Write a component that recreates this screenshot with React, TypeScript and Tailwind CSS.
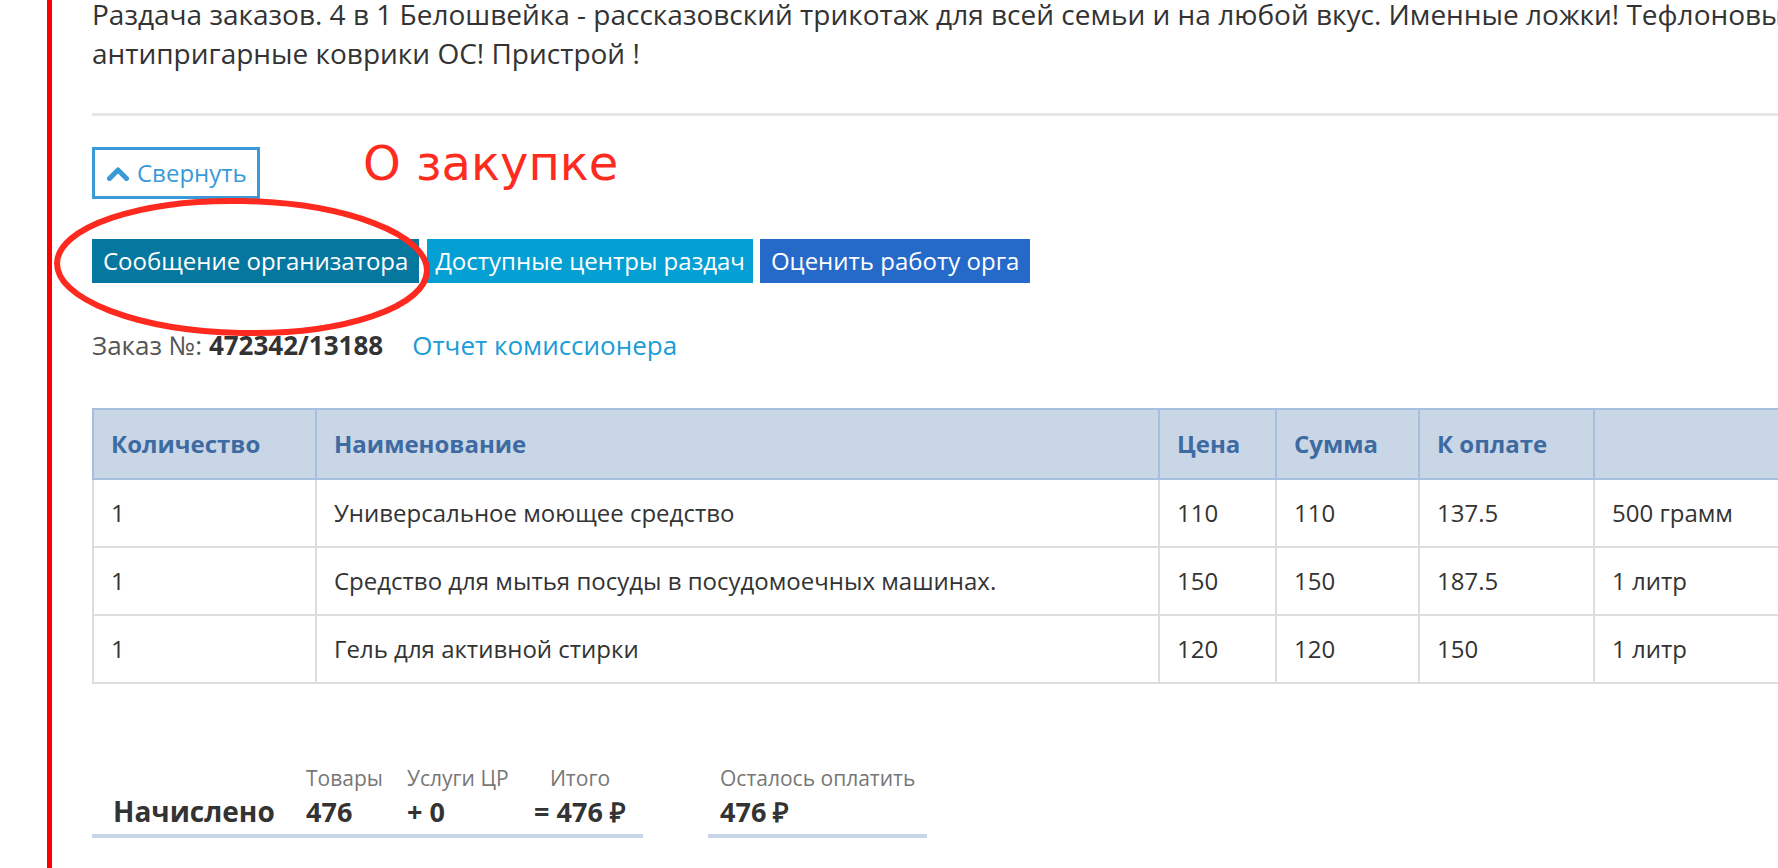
import React from "react";

type Row = {
  qty: string;
  name: string;
  price: string;
  sum: string;
  toPay: string;
  note: string;
};

const rows: Row[] = [
  { qty: "1", name: "Универсальное моющее средство", price: "110", sum: "110", toPay: "137.5", note: "500 грамм" },
  { qty: "1", name: "Средство для мытья посуды в посудомоечных машинах.", price: "150", sum: "150", toPay: "187.5", note: "1 литр" },
  { qty: "1", name: "Гель для активной стирки", price: "120", sum: "120", toPay: "150", note: "1 литр" },
];

const ChevronUp = () => (
  <svg width="22" height="15" viewBox="0 0 22 15" className="shrink-0">
    <path d="M2.5 12.5 L11 4 L19.5 12.5" fill="none" stroke="#3a9ad8" strokeWidth="5" strokeLinejoin="round" strokeLinecap="round" />
  </svg>
);

type SumColProps = {
  label: string;
  value: string;
  width: string;
  center?: boolean;
};

const SumCol = ({ label, value, width, center }: SumColProps) => (
  <div className={`${width} ${center ? "text-center" : ""}`}>
    <div className="text-[21px] leading-[28px] text-[#777]">{label}</div>
    <div className="mt-[3px] text-[27px] leading-[33px] font-bold text-[#333]">{value}</div>
  </div>
);

export default function App() {
  return (
    <div className="relative h-[868px] w-full overflow-hidden bg-white font-['Open_Sans',sans-serif] text-[#333]">
      <div className="w-[1932px] pl-[92px]">
        <p className="mt-[-5px] w-[1770px] text-[28px] leading-[39px] text-[#333]">
          Раздача заказов. 4 в 1 Белошвейка - рассказовский трикотаж для всей семьи и на любой вкус. Именные ложки! Тефлоновые
          антипригарные коврики ОС! Пристрой !
        </p>

        <div className="mt-[40px] h-[3px] bg-[#e6e6e6]" />

        <div className="mt-[31px] flex items-start">
          <button className="flex h-[52px] w-[168px] items-center gap-[8px] border-[3px] border-[#3a9ad8] pl-[12px] text-[24px] text-[#3a9ad8]">
            <ChevronUp />
            <span>Свернуть</span>
          </button>
          <div className="ml-[103px] mt-[-14px] font-['DejaVu_Sans',sans-serif] text-[48px] leading-[60px] text-[#fe2c1f]">
            О закупке
          </div>
        </div>

        <div className="mt-[40px] flex h-[44px] items-stretch text-[24px] text-white">
          <div className="flex items-center bg-[#06779f] px-[11px]">Сообщение организатора</div>
          <div className="ml-[8px] flex items-center bg-[#049fd3] px-[8px]">Доступные центры раздач</div>
          <div className="ml-[7px] flex items-center bg-[#2569c9] px-[11px]">Оценить работу орга</div>
        </div>

        <div className="mt-[43px] flex text-[26px] leading-[39px]">
          <span className="text-[#555]">Заказ №:&nbsp;</span>
          <span className="font-bold text-[#333]">472342/13188</span>
          <span className="ml-[29px] text-[#1a9cd6]">Отчет комиссионера</span>
        </div>

        <table className="mt-[43px] w-[1840px] table-fixed border-collapse text-[24px]">
          <colgroup>
            <col className="w-[223px]" />
            <col className="w-[843px]" />
            <col className="w-[117px]" />
            <col className="w-[143px]" />
            <col className="w-[175px]" />
            <col />
          </colgroup>
          <thead>
            <tr className="h-[70px] bg-[#c9d6e6]">
              {["Количество", "Наименование", "Цена", "Сумма", "К оплате", ""].map((h, i) => (
                <th
                  key={i}
                  className="border-2 border-[#a6bfdd] px-[17px] text-left font-bold text-[#3e6aa2]"
                >
                  {h}
                </th>
              ))}
            </tr>
          </thead>
          <tbody>
            {rows.map((r, i) => (
              <tr key={i} className="h-[68px]">
                {[r.qty, r.name, r.price, r.sum, r.toPay, r.note].map((c, j) => (
                  <td key={j} className="border-2 border-[#dddddd] px-[17px] text-[#333]">
                    {c}
                  </td>
                ))}
              </tr>
            ))}
          </tbody>
        </table>

        <div className="mt-[80px] flex items-end">
          <div className="flex w-[551px] items-end border-b-4 border-[#c9d6e7] pb-[6px] pl-[21px]">
            <div className="w-[193px] text-[28px] font-bold leading-[33px] text-[#333]">Начислено</div>
            <SumCol label="Товары" value="476" width="w-[101px]" />
            <SumCol label="Услуги ЦР" value="+ 0" width="w-[110px]" />
            <SumCol label="Итого" value="= 476 ₽" width="w-[126px]" center />
          </div>
          <div className="ml-[65px] w-[219px] border-b-4 border-[#c9d6e7] pb-[6px] pl-[12px]">
            <SumCol label="Осталось оплатить" value="476 ₽" width="w-full" />
          </div>
        </div>
      </div>

      {/* annotation overlays */}
      <div className="absolute bottom-0 left-[47px] top-0 w-[5px] bg-[#ff0000]" />
      <svg className="absolute left-[50px] top-[194px]" width="384" height="146" viewBox="0 0 384 146">
        <ellipse cx="192" cy="73" rx="185" ry="66" fill="none" stroke="#fe2a1f" strokeWidth="6" transform="rotate(1.2 192 73)" />
      </svg>
    </div>
  );
}
